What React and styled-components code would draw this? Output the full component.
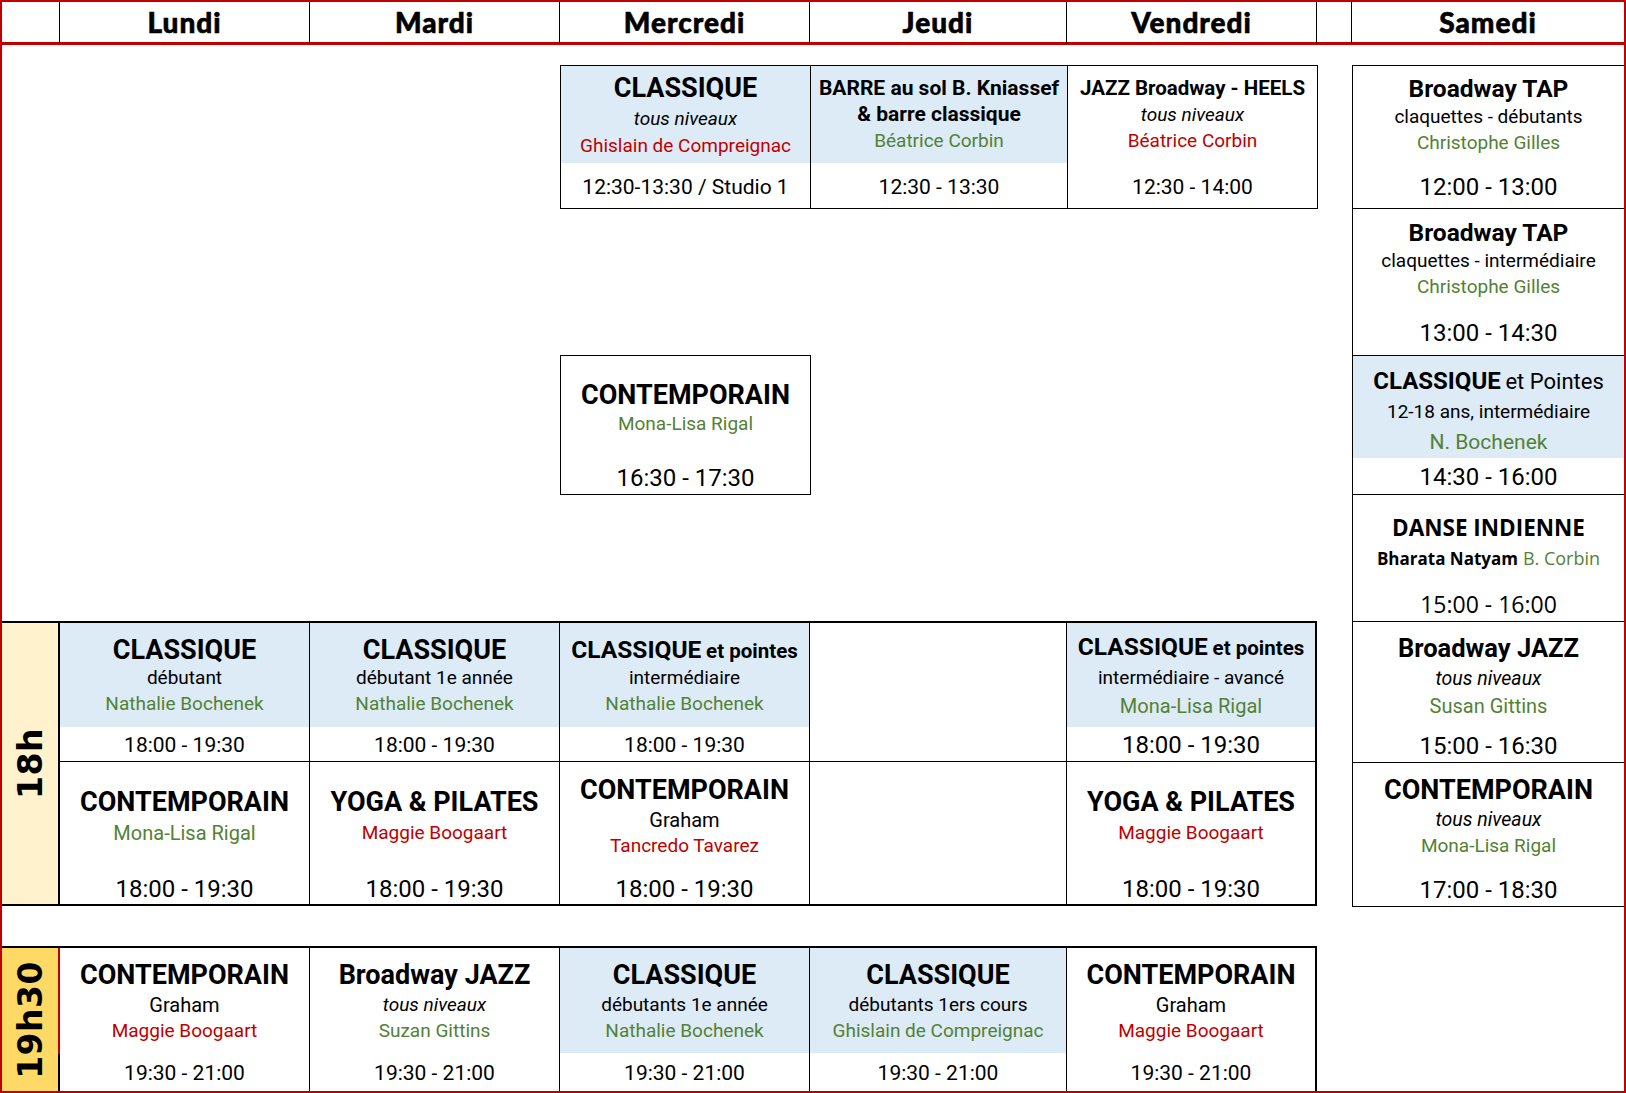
import React from 'react';
import styled, { createGlobalStyle } from 'styled-components';

const RED = '#C00000';
const GREEN = '#538135';
const BLUE = '#DDEBF7';

const GlobalStyle = createGlobalStyle`
  html, body { margin: 0; padding: 0; background: #fff; }
  body { font-family: Roboto, "Liberation Sans", sans-serif; color: #000; }
`;

const Sheet = styled.div`
  box-sizing: border-box;
  width: 1626px;
  height: 1093px;
  border: 2px solid ${RED};
  display: grid;
  grid-template-columns: 58px 250px 250px 250px 257px 250px 35px 272px;
  grid-template-rows: 43px 20px 143px 147px 139px 127px 141px 144px 40px 145px;
`;

const DayHead = styled.div`
  grid-row: 1;
  grid-column: ${p => p.$col};
  box-sizing: border-box;
  border-bottom: 3px solid ${RED};
  border-right: ${p => (p.$last ? 'none' : '1px solid #000')};
  display: flex;
  align-items: center;
  justify-content: center;
  font-family: Lato, "DejaVu Sans", sans-serif;
  font-weight: 900;
  font-size: 28px;
  letter-spacing: 1px;
  -webkit-text-stroke: 0.6px #000;
`;

const Slot = styled.div`
  grid-column: ${p => p.$col};
  grid-row: ${p => p.$row};
  box-sizing: border-box;
  border: 1px solid #000;
  border-right: ${p => (p.$edge ? 'none' : '1px solid #000')};
  margin: 0 ${p => (p.$edge ? 0 : -1)}px -1px 0;
  display: flex;
  flex-direction: column;
  background: #fff;
  font-family: ${p => p.$font || 'Roboto'}, "Liberation Sans", sans-serif;
`;

const Band = styled.div`
  grid-column: 1 / 7;
  grid-row: ${p => p.$row};
  box-sizing: border-box;
  border-top: 2px solid #000;
  border-bottom: ${p => (p.$open ? 'none' : '2px solid #000')};
  border-right: 2px solid #000;
  display: grid;
  grid-template-columns: 58px 250px 250px 250px 257px 1fr;
  grid-template-rows: ${p => p.$rows};
`;

const HourLabel = styled.div`
  grid-column: 1;
  grid-row: 1 / -1;
  box-sizing: border-box;
  background: ${p => p.$bg};
  border-right: 2px solid #000;
  ${p => p.$redTop && `border-image: linear-gradient(to bottom, ${RED} 74%, #000 74%) 1;`}
  display: flex;
  align-items: center;
  justify-content: center;
`;

const HourText = styled.span`
  writing-mode: vertical-rl;
  transform: rotate(180deg);
  font-family: "DejaVu Sans", "Liberation Sans", sans-serif;
  font-weight: 700;
  font-size: 33px;
  letter-spacing: 0.5px;
`;

const BandCell = styled.div`
  grid-column: ${p => p.$col};
  grid-row: ${p => p.$row};
  box-sizing: border-box;
  border-right: ${p => (p.$last ? 'none' : '1px solid #000')};
  border-bottom: ${p => (p.$top ? '1px solid #000' : 'none')};
  display: flex;
  flex-direction: column;
`;

const Info = styled.div`
  flex: none;
  height: ${p => p.$h}px;
  box-sizing: border-box;
  padding-top: ${p => p.$pad}px;
  background: ${p => (p.$blue ? BLUE : 'transparent')};
  display: flex;
  flex-direction: column;
  align-items: center;
  text-align: center;
`;

const Line = styled.div`
  height: ${p => p.$h}px;
  line-height: ${p => p.$h}px;
  font-size: ${p => p.$size}px;
  font-weight: ${p => (p.$bold ? 700 : 400)};
  font-style: ${p => (p.$italic ? 'italic' : 'normal')};
  color: ${p => p.$color || '#000'};
  white-space: nowrap;
`;

const Part = styled.span`
  font-size: ${p => p.$size}px;
  font-weight: ${p => (p.$bold ? 700 : 400)};
  color: ${p => p.$color || '#000'};
`;

const Time = styled.div`
  flex: 1;
  display: flex;
  align-items: center;
  justify-content: center;
  padding-top: 2px;
  font-size: ${p => p.$size}px;
  white-space: nowrap;
`;

const KINDS = {
  title: { size: 27, bold: true },
  title24: { size: 24.5, bold: true },
  head: { size: 21, bold: true },
  sub: { size: 19 },
  sub20: { size: 20 },
  it: { size: 19, italic: true },
  it20: { size: 19.5, italic: true },
  red: { size: 19, color: RED },
  green: { size: 19, color: GREEN },
  plain: { size: 19 },
};

function Card({ c }) {
  return (
    <>
      <Info $blue={c.blue} $h={c.topH} $pad={c.pad}>
        {c.lines.map((l, i) => {
          const k = KINDS[l.k];
          return (
            <Line
              key={i}
              $h={l.h}
              $size={l.size || k.size}
              $bold={k.bold}
              $italic={k.italic}
              $color={k.color}
            >
              {l.t}
            </Line>
          );
        })}
      </Info>
      <Time $size={c.ts}>{c.time}</Time>
    </>
  );
}

const t = (k, h, text, size) => ({ k, h, t: text, size });

const slots = [
  { col: 4, row: 3, blue: true, topH: 97, pad: 7, ts: 21, time: '12:30-13:30 / Studio 1',
    lines: [t('title', 30, 'CLASSIQUE'), t('it', 32, 'tous niveaux'), t('red', 22, 'Ghislain de Compreignac')] },
  { col: 5, row: 3, blue: true, topH: 97, pad: 9, ts: 21, time: '12:30 - 13:30',
    lines: [t('head', 26, 'BARRE au sol B. Kniassef'), t('head', 27, '& barre classique'), t('green', 26, 'Béatrice Corbin')] },
  { col: 6, row: 3, topH: 97, pad: 9, ts: 21, time: '12:30 - 14:00',
    lines: [t('head', 26, 'JAZZ Broadway - HEELS', 20.5), t('it', 27, 'tous niveaux'), t('red', 26, 'Béatrice Corbin')] },
  { col: 4, row: 5, topH: 103, pad: 24, ts: 24, time: '16:30 - 17:30',
    lines: [t('title', 30, 'CONTEMPORAIN'), t('green', 28, 'Mona-Lisa Rigal')] },
  { col: 8, row: 3, edge: true, topH: 97, pad: 9, ts: 24, time: '12:00 - 13:00',
    lines: [t('title24', 28, 'Broadway TAP'), t('sub', 28, 'claquettes - débutants'), t('green', 24, 'Christophe Gilles')] },
  { col: 8, row: 4, edge: true, topH: 100, pad: 10, ts: 24, time: '13:00 - 14:30',
    lines: [t('title24', 28, 'Broadway TAP'), t('sub', 28, 'claquettes - intermédiaire'), t('green', 24, 'Christophe Gilles')] },
  { col: 8, row: 5, edge: true, blue: true, topH: 102, pad: 10, ts: 24, time: '14:30 - 16:00',
    lines: [
      t('plain', 30, <><Part $bold $size={24}>CLASSIQUE</Part> <Part $size={22}>et Pointes</Part></>),
      t('sub', 32, '12-18 ans, intermédiaire'),
      t('green', 28, 'N. Bochenek', 21),
    ] },
  { col: 8, row: 6, edge: true, font: '"Open Sans"', topH: 90, pad: 18, ts: 23, time: '15:00 - 16:00',
    lines: [
      t('title', 30, 'DANSE INDIENNE', 22.5),
      t('plain', 30, <><Part $bold $size={17}>Bharata Natyam</Part> <Part $size={18} $color={GREEN}>B. Corbin</Part></>),
    ] },
  { col: 8, row: 7, edge: true, topH: 106, pad: 11, ts: 24, time: '15:00 - 16:30',
    lines: [t('title', 30, 'Broadway JAZZ', 25.5), t('it20', 32, 'tous niveaux'), t('green', 22, 'Susan Gittins', 20)] },
  { col: 8, row: 8, edge: true, topH: 109, pad: 12, ts: 24, time: '17:00 - 18:30',
    lines: [t('title', 30, 'CONTEMPORAIN'), t('it20', 30, 'tous niveaux'), t('green', 22, 'Mona-Lisa Rigal')] },
];

const pointes = (a, b) => (
  <><Part $bold $size={a}>CLASSIQUE</Part> <Part $bold $size={b}>et pointes</Part></>
);

const eveningTop = [
  { blue: true, topH: 104, pad: 12, ts: 21, time: '18:00 - 19:30',
    lines: [t('title', 30, 'CLASSIQUE'), t('sub', 26, 'débutant'), t('green', 25, 'Nathalie Bochenek')] },
  { blue: true, topH: 104, pad: 12, ts: 21, time: '18:00 - 19:30',
    lines: [t('title', 30, 'CLASSIQUE'), t('sub', 26, 'débutant 1e année'), t('green', 25, 'Nathalie Bochenek')] },
  { blue: true, topH: 104, pad: 12, ts: 21, time: '18:00 - 19:30',
    lines: [t('plain', 30, pointes(24.5, 20.5)), t('sub', 26, 'intermédiaire'), t('green', 25, 'Nathalie Bochenek')] },
  null,
  { blue: true, topH: 104, pad: 10, ts: 24, time: '18:00 - 19:30',
    lines: [t('plain', 28, pointes(24.5, 20.5)), t('sub', 34, 'intermédiaire - avancé'), t('green', 22, 'Mona-Lisa Rigal', 20)] },
];

const eveningBottom = [
  { topH: 110, pad: 24, ts: 24, time: '18:00 - 19:30',
    lines: [t('title', 32, 'CONTEMPORAIN'), t('green', 30, 'Mona-Lisa Rigal', 20)] },
  { topH: 110, pad: 24, ts: 24, time: '18:00 - 19:30',
    lines: [t('title', 32, 'YOGA & PILATES'), t('red', 30, 'Maggie Boogaart')] },
  { topH: 110, pad: 12, ts: 24, time: '18:00 - 19:30',
    lines: [t('title', 32, 'CONTEMPORAIN'), t('sub20', 28, 'Graham'), t('red', 24, 'Tancredo Tavarez')] },
  null,
  { topH: 110, pad: 24, ts: 24, time: '18:00 - 19:30',
    lines: [t('title', 32, 'YOGA & PILATES'), t('red', 30, 'Maggie Boogaart')] },
];

const late = [
  { topH: 105, pad: 12, ts: 21, time: '19:30 - 21:00',
    lines: [t('title', 30, 'CONTEMPORAIN'), t('sub20', 30, 'Graham'), t('red', 22, 'Maggie Boogaart')] },
  { topH: 105, pad: 12, ts: 21, time: '19:30 - 21:00',
    lines: [t('title', 30, 'Broadway JAZZ'), t('it', 30, 'tous niveaux'), t('green', 22, 'Suzan Gittins')] },
  { blue: true, topH: 105, pad: 12, ts: 21, time: '19:30 - 21:00',
    lines: [t('title', 30, 'CLASSIQUE'), t('sub', 30, 'débutants 1e année'), t('green', 22, 'Nathalie Bochenek')] },
  { blue: true, topH: 105, pad: 12, ts: 21, time: '19:30 - 21:00',
    lines: [t('title', 30, 'CLASSIQUE'), t('sub', 30, 'débutants 1ers cours'), t('green', 22, 'Ghislain de Compreignac')] },
  { topH: 105, pad: 12, ts: 21, time: '19:30 - 21:00',
    lines: [t('title', 30, 'CONTEMPORAIN'), t('sub20', 30, 'Graham'), t('red', 22, 'Maggie Boogaart')] },
];

const days = ['', 'Lundi', 'Mardi', 'Mercredi', 'Jeudi', 'Vendredi', '', 'Samedi'];

function BandRow({ cards, row, top }) {
  return cards.map((c, i) => (
    <BandCell key={i} $col={i + 2} $row={row} $top={top} $last={i === cards.length - 1}>
      {c && <Card c={c} />}
    </BandCell>
  ));
}

export default function App() {
  return (
    <>
      <GlobalStyle />
      <Sheet>
        {days.map((d, i) => (
          <DayHead key={i} $col={i + 1} $last={i === days.length - 1}>{d}</DayHead>
        ))}

        {slots.map((c, i) => (
          <Slot key={i} $col={c.col} $row={c.row} $edge={c.edge} $font={c.font}>
            <Card c={c} />
          </Slot>
        ))}

        <Band $row="7 / 9" $rows="139px 1fr">
          <HourLabel $bg="#FFF2CC"><HourText>18h</HourText></HourLabel>
          <BandRow cards={eveningTop} row={1} top />
          <BandRow cards={eveningBottom} row={2} />
        </Band>

        <Band $row="10" $rows="1fr" $open>
          <HourLabel $bg="#FFD966" $redTop><HourText>19h30</HourText></HourLabel>
          <BandRow cards={late} row={1} />
        </Band>
      </Sheet>
    </>
  );
}
